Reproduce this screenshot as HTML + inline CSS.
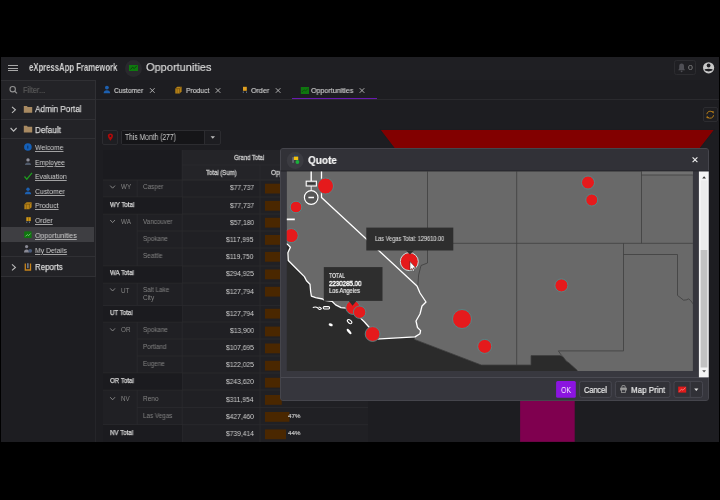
<!DOCTYPE html>
<html><head><meta charset="utf-8">
<style>
html,body{margin:0;padding:0;background:#000;width:720px;height:500px;overflow:hidden;font-family:"Liberation Sans",sans-serif;}
.b{position:absolute;box-sizing:border-box;}
.t{position:absolute;white-space:nowrap;transform-origin:0 50%;z-index:5;will-change:transform;}
svg{position:absolute;left:0;top:0;}
</style></head><body>
<div class="b" style="left:1px;top:57px;width:718px;height:385px;background:#1d1d21;"></div>
<!-- header -->
<div class="b" style="left:1px;top:57px;width:718px;height:23px;background:#1f1f23;"></div>
<div class="b" style="left:8px;top:64.7px;width:9.5px;height:1.2px;background:#a8a8a8;"></div>
<div class="b" style="left:8px;top:67.6px;width:9.5px;height:1.2px;background:#a8a8a8;"></div>
<div class="b" style="left:8px;top:70.3px;width:9.5px;height:1.2px;background:#a8a8a8;"></div>
<div class="b" style="left:124.8px;top:59.8px;width:17px;height:17px;border-radius:50%;background:#29292d;"></div>
<div class="b" style="left:129.2px;top:64.5px;width:8.8px;height:6.8px;background:#0f7a0f;"></div>
<svg width="720" height="500" style="z-index:2"><polyline points="130.5,69.5 132.5,67.2 134.3,68.5 136.8,65.8" fill="none" stroke="#0a3d0a" stroke-width="0.9"/></svg>
<div class="b" style="left:674.3px;top:60.3px;width:21.5px;height:14.6px;border:1px solid #2c2c30;border-radius:2.5px;"></div>
<svg width="720" height="500" style="z-index:2">
 <path d="M678.2,70.3 L685,70.3 L684,68.6 L684,66.2 Q684,63.6 681.6,63.6 Q679.2,63.6 679.2,66.2 L679.2,68.6 Z" fill="#4f4f55"/>
 <circle cx="681.6" cy="71.3" r="0.9" fill="#4f4f55"/>
 <circle cx="708.6" cy="67.8" r="5.6" fill="#c9c9c9"/>
 <circle cx="708.6" cy="65.5" r="1.9" fill="#1f1f23"/>
 <path d="M704.6,69.2 Q708.6,68.2 712.6,69.2 L712.2,70.6 Q708.6,72.2 705,70.6 Z" fill="#1f1f23"/>
</svg>
<!-- sidebar -->
<div class="b" style="left:1px;top:80px;width:94.6px;height:197px;background:#232327;border-top:1px solid #303034;border-right:1px solid #303034;"></div>
<div class="b" style="left:94.6px;top:277px;width:1px;height:165px;background:#252529;"></div>
<div class="b" style="left:1px;top:98.6px;width:94px;height:1px;background:#303034;"></div>
<div class="b" style="left:1px;top:118.6px;width:94px;height:1px;background:#303034;"></div>
<div class="b" style="left:1px;top:138.2px;width:94px;height:1px;background:#303034;"></div>
<div class="b" style="left:1px;top:227px;width:93.4px;height:15px;background:#3e3e42;"></div>
<div class="b" style="left:1px;top:256px;width:94px;height:1px;background:#303034;"></div>
<div class="b" style="left:1px;top:276.2px;width:94px;height:1px;background:#303034;"></div>
<svg width="720" height="500" style="z-index:2">
 <!-- search -->
 <circle cx="12.7" cy="89.2" r="2.7" fill="none" stroke="#929292" stroke-width="1.1"/>
 <line x1="14.7" y1="91.2" x2="17" y2="93.4" stroke="#929292" stroke-width="1.2"/>
 <!-- chevrons -->
 <polyline points="12,106.8 15.4,109.8 12,112.8" fill="none" stroke="#bcbcbc" stroke-width="1.1"/>
 <polyline points="10.6,128 13.6,131.2 16.6,128" fill="none" stroke="#bcbcbc" stroke-width="1.1"/>
 <polyline points="12,264.4 15.4,267.4 12,270.4" fill="none" stroke="#bcbcbc" stroke-width="1.1"/>
 <!-- folders -->
 <path d="M23.8,106 h3 l1,1 h4.4 v5.8 h-8.4 z" fill="#a88a62"/>
 <path d="M23.8,125.7 h3 l1,1 h4.4 v5.8 h-8.4 z" fill="#a88a62"/>
 <!-- welcome -->
 <circle cx="27.9" cy="147" r="3.8" fill="#1560b8"/>
 <rect x="27.3" y="145.6" width="1" height="3" fill="#0b2f5c"/>
 <!-- employee -->
 <circle cx="28" cy="159.9" r="1.7" fill="#8f8f9a"/>
 <path d="M25,165 Q25,162.4 28,162.4 Q31,162.4 31,165 Z" fill="#505a6a"/>
 <!-- evaluation check -->
 <polyline points="24.5,176.5 26.8,179.2 32,172.8" fill="none" stroke="#1f9e1f" stroke-width="1.2"/>
 <!-- customer -->
 <circle cx="28" cy="189.3" r="1.7" fill="#1d60b0"/>
 <path d="M24.8,194.3 Q25,191.6 28,191.6 Q31,191.6 31.2,194.3 Z" fill="#1d60b0"/>
 <!-- product -->
 <path d="M24.4,204.2 L26.6,202.3 L31.6,202.3 L31.6,207.2 L29.4,209.2 L24.4,209.2 Z" fill="#b88418"/>
 <path d="M24.4,204.2 L29.4,204.2 L31.6,202.3 M29.4,204.2 L29.4,209.2" fill="none" stroke="#5a3c08" stroke-width="0.5"/>
 <line x1="26.4" y1="204.4" x2="26.4" y2="209" stroke="#7a5410" stroke-width="0.6"/>
 <!-- order -->
 <rect x="26.3" y="217.2" width="4.5" height="3.9" fill="#d09818"/>
 <line x1="28.55" y1="217.4" x2="28.55" y2="221" stroke="#6a4a08" stroke-width="0.5"/>
 <rect x="26.2" y="221.6" width="1" height="1.4" fill="#5a6a80"/>
 <rect x="29" y="221.6" width="1" height="1.4" fill="#5a6a80"/>
 <!-- opportunities -->
 <rect x="24.2" y="231.4" width="7.4" height="6.6" fill="#0f760f"/>
 <polyline points="25.5,236.4 27.3,234.6 28.6,235.6 30.5,233.6" fill="none" stroke="#9ad89a" stroke-width="0.7"/>
 <!-- my details -->
 <circle cx="26.6" cy="246.6" r="1.6" fill="#8a8a95"/>
 <path d="M24,252.4 Q24,249.4 26.6,249.4 Q29.2,249.4 29.2,252.4 Z" fill="#8a8a95"/>
 <circle cx="30.2" cy="250.8" r="1.9" fill="#4a5a78"/>
 <!-- reports -->
 <path d="M25.3,263.6 V270 H30.5 V263.6" fill="none" stroke="#c8841a" stroke-width="1.3"/>
 <rect x="27.4" y="263.2" width="1" height="5" fill="#9fb0c8"/>
</svg>
<!-- tab bar -->
<div class="b" style="left:96px;top:98.6px;width:623px;height:1.1px;background:#2a2a2e;"></div>
<div class="b" style="left:292.3px;top:97.6px;width:84.4px;height:1.6px;background:#6a1ab0;z-index:3"></div>
<svg width="720" height="500" style="z-index:2">
 <!-- customer icon -->
 <circle cx="106.9" cy="87.6" r="1.9" fill="#1d60b0"/>
 <path d="M103.6,93.3 Q103.8,90.2 106.9,90.2 Q110,90.2 110.2,93.3 Z" fill="#1d60b0"/>
 <!-- product icon -->
 <path d="M175.3,88.6 L177.3,86.8 L181.6,86.8 L181.6,91.6 L179.6,93.4 L175.3,93.4 Z" fill="#b88418"/>
 <path d="M175.3,88.6 L179.6,88.6 L181.6,86.8 M179.6,88.6 L179.6,93.4" fill="none" stroke="#5a3c08" stroke-width="0.5"/>
 <line x1="177.2" y1="88.8" x2="177.2" y2="93.2" stroke="#7a5410" stroke-width="0.6"/>
 <!-- order icon -->
 <rect x="243" y="86.8" width="3.8" height="4" fill="#e0a020"/>
 <rect x="242.8" y="91.4" width="1" height="1.6" fill="#5a6a80"/>
 <rect x="246" y="91.4" width="1" height="1.6" fill="#5a6a80"/>
 <!-- opp icon -->
 <rect x="300.8" y="87" width="8.2" height="7" fill="#0f760f"/>
 <polyline points="302,92 304,89.8 305.6,91 307.8,88.6" fill="none" stroke="#0b4a0b" stroke-width="0.8"/>
 <!-- close x -->
 <g stroke="#bdbdbd" stroke-width="0.9">
  <path d="M150,88.2 l4.6,4.6 M154.6,88.2 l-4.6,4.6"/>
  <path d="M215.7,88.2 l4.6,4.6 M220.3,88.2 l-4.6,4.6"/>
  <path d="M275.8,88.2 l4.6,4.6 M280.4,88.2 l-4.6,4.6"/>
  <path d="M359.7,88.2 l4.6,4.6 M364.3,88.2 l-4.6,4.6"/>
 </g>
</svg>
<!-- toolbar -->
<div class="b" style="left:102.4px;top:129.6px;width:15.2px;height:15px;border:1px solid #2c2c30;border-radius:2px;background:#1e1e22;"></div>
<div class="b" style="left:121.2px;top:129.9px;width:99.6px;height:14.8px;border:1px solid #2c2c30;border-radius:2px;background:#1d1d21;"></div>
<div class="b" style="left:122.2px;top:130.9px;width:83.2px;height:12.8px;background:#151518;border-right:1px solid #2c2c30;"></div>
<div class="b" style="left:702.6px;top:107.2px;width:15px;height:15px;border:1px solid #2c2c30;border-radius:2px;background:#1e1e22;"></div>
<svg width="720" height="500" style="z-index:2">
 <path d="M110.4,140.8 Q107.8,137.6 107.8,136 A2.6,2.6 0 1 1 113,136 Q113,137.6 110.4,140.8 Z" fill="#b00a0a"/>
 <circle cx="110.4" cy="136" r="0.9" fill="#1e1e22"/>
 <path d="M210.6,136.3 h4.4 l-2.2,2.4 z" fill="#bdbdbd"/>
 <!-- refresh -->
 <path d="M706.8,114.2 A3.4,3.4 0 0 1 712.6,112.2" fill="none" stroke="#b27a18" stroke-width="1"/>
 <path d="M713.6,115.2 A3.4,3.4 0 0 1 707.8,117.2" fill="none" stroke="#b27a18" stroke-width="1"/>
 <path d="M711.4,111 l2.6,0.4 l-0.6,2.4 z" fill="#b27a18"/>
 <path d="M709,118.4 l-2.6,-0.4 l0.6,-2.4 z" fill="#b27a18"/>
</svg>
<!-- funnel chart -->
<svg width="720" height="500" style="z-index:1">
 <polygon points="380,129.5 714.6,129.5 680,174 414,174" fill="#820000" stroke="#0f2024" stroke-width="0.8"/>
 <rect x="520.1" y="395" width="54.6" height="46.8" fill="#7f004f"/>
</svg>
<!-- pivot grid -->
<div class="b" style="left:103px;top:150px;width:265px;height:292px;background:#202024;"></div>
<div class="b" style="left:103px;top:150px;width:79px;height:30px;background:#1b1b1f;"></div>
<div class="b" style="left:182px;top:150px;width:186px;height:30px;background:#242428;"></div>
<svg width="720" height="500" style="z-index:2" id="pv">
 <g stroke="#2b2b2f" stroke-width="0.8" fill="none">
  <line x1="182" y1="165" x2="368" y2="165"/>
  <line x1="182" y1="180" x2="368" y2="180"/>
  <line x1="182.2" y1="150" x2="182.2" y2="442"/>
  <line x1="260" y1="165" x2="260" y2="442"/>
  <line x1="137.2" y1="180" x2="137.2" y2="197"/>
  <line x1="137.2" y1="214" x2="137.2" y2="266"/>
  <line x1="137.2" y1="283" x2="137.2" y2="305.6"/>
  <line x1="137.2" y1="322" x2="137.2" y2="373"/>
  <line x1="137.2" y1="390" x2="137.2" y2="424.7"/>
 </g>
 <g stroke="#2b2b2f" stroke-width="0.8">
  <line x1="103" y1="180" x2="368" y2="180"/>
  <line x1="103" y1="197" x2="368" y2="197"/>
  <line x1="103" y1="214" x2="368" y2="214"/>
  <line x1="137" y1="231" x2="368" y2="231"/>
  <line x1="137" y1="248" x2="368" y2="248"/>
  <line x1="103" y1="266" x2="368" y2="266"/>
  <line x1="103" y1="283" x2="368" y2="283"/>
  <line x1="103" y1="305.6" x2="368" y2="305.6"/>
  <line x1="103" y1="322" x2="368" y2="322"/>
  <line x1="137" y1="339" x2="368" y2="339"/>
  <line x1="137" y1="356" x2="368" y2="356"/>
  <line x1="103" y1="373" x2="368" y2="373"/>
  <line x1="103" y1="390" x2="368" y2="390"/>
  <line x1="137" y1="407.5" x2="368" y2="407.5"/>
  <line x1="103" y1="424.7" x2="368" y2="424.7"/>
 </g>
 <g fill="#1b1b1f">
  <rect x="103" y="197.4" width="79" height="16.2"/>
  <rect x="103" y="266.4" width="79" height="16.2"/>
  <rect x="103" y="306" width="79" height="15.6"/>
  <rect x="103" y="373.4" width="79" height="16.2"/>
  <rect x="103" y="425.1" width="79" height="16.9"/>
 </g>
 <g fill="none" stroke="#8e8e8e" stroke-width="0.9">
  <polyline points="110.2,185.6 112.6,188.2 115,185.6"/>
  <polyline points="110.2,220 112.6,222.6 115,220"/>
  <polyline points="110.2,288.4 112.6,291 115,288.4"/>
  <polyline points="110.2,328.4 112.6,331 115,328.4"/>
  <polyline points="110.2,397.2 112.6,399.8 115,397.2"/>
 </g>
 <g fill="#4a2700">
  <rect x="265" y="183.7" width="30" height="9.8"/>
  <rect x="265" y="200.9" width="30" height="9.8"/>
  <rect x="265" y="217.8" width="25" height="9.8"/>
  <rect x="265" y="235" width="28" height="9.8"/>
  <rect x="265" y="251.9" width="28" height="9.8"/>
  <rect x="265" y="269.5" width="30" height="9.8"/>
  <rect x="265" y="286.8" width="30" height="9.8"/>
  <rect x="265" y="308.8" width="30" height="9.8"/>
  <rect x="265" y="326.6" width="22" height="9.8"/>
  <rect x="265" y="343.5" width="28" height="9.8"/>
  <rect x="265" y="360.8" width="28" height="9.8"/>
  <rect x="265" y="377.8" width="30" height="9.8"/>
  <rect x="265" y="395" width="16.8" height="9.8"/>
  <rect x="265" y="412" width="24.4" height="9.8"/>
  <rect x="265" y="429.4" width="21" height="9.8"/>
 </g>
</svg>
<!-- dialog -->
<div class="b" style="left:280px;top:148px;width:429px;height:253.3px;background:#38383f;border:1px solid #45454c;border-radius:3px;z-index:10;overflow:hidden;">
  <div class="b" style="left:0;top:0;width:100%;height:22.5px;background:#313137;"></div>
  <div class="b" style="left:0;top:228.3px;width:100%;height:1px;background:#4a4a52;"></div>
  <div class="b" style="left:0;top:229.3px;width:100%;height:24px;background:#36363d;"></div>
</div>
<svg width="720" height="500" style="z-index:11">
 <circle cx="295.2" cy="160.6" r="8.5" fill="#3b3b41"/>
 <rect x="292.3" y="157.2" width="1.5" height="5.6" fill="#70707c"/>
 <rect x="294" y="155" width="4.2" height="1.4" fill="#24406a"/>
 <rect x="293.9" y="156.6" width="4.3" height="3.4" fill="#f0c010"/>
 <circle cx="297.4" cy="162" r="1.9" fill="#1ab03a"/>
 <path d="M692.6,157.4 l4.8,4.8 M697.4,157.4 l-4.8,4.8" stroke="#f0f0f0" stroke-width="1.1"/>
 <!-- scrollbar -->
 <rect x="692.9" y="171.3" width="6" height="199.8" fill="#36363d"/>
 <rect x="698.9" y="171.3" width="9.8" height="206" fill="#f4f4f4"/>
 <rect x="701" y="180.4" width="6.3" height="69.6" fill="#ececec"/>
 <rect x="700.6" y="250" width="6.8" height="117.5" fill="#c2c2c2"/>
 <path d="M702.2,178.4 h3.8 l-1.9,-2.2 z" fill="#333"/>
 <path d="M702.2,370.2 h3.8 l-1.9,2.2 z" fill="#555"/>
 <!-- buttons -->
 <rect x="556.1" y="381" width="19.7" height="16.7" rx="1.5" fill="#8b14e0"/>
 <rect x="579.6" y="381.4" width="31.7" height="16" rx="2" fill="#313137" stroke="#4a4a52" stroke-width="0.9"/>
 <rect x="615.4" y="381.4" width="54.6" height="16" rx="2" fill="#313137" stroke="#4a4a52" stroke-width="0.9"/>
 <rect x="674" y="381.4" width="28.5" height="16" rx="2" fill="#313137" stroke="#4a4a52" stroke-width="0.9"/>
 <line x1="690.2" y1="381.6" x2="690.2" y2="397.2" stroke="#4a4a52" stroke-width="0.9"/>
 <rect x="678.2" y="386.6" width="8" height="6" fill="#e01a1a"/>
 <polyline points="679.2,391.6 681.4,389.2 683,390.2 685.4,387.6" fill="none" stroke="#f4b0b0" stroke-width="0.6"/>
 <path d="M694.2,388.6 h4.2 l-2.1,2.4 z" fill="#e0e0e0"/>
 <!-- printer -->
 <path d="M621.6,387.6 L622.2,385.6 L624.8,385.6 L625.4,387.6" fill="none" stroke="#9a9a9a" stroke-width="0.9"/>
 <rect x="620.2" y="387.4" width="6.6" height="3.4" rx="0.8" fill="#9a9a9a"/>
 <rect x="621.6" y="389.8" width="3.8" height="2.8" fill="#36363d" stroke="#9a9a9a" stroke-width="0.8"/>
</svg>
<!-- map -->
<svg width="720" height="500" style="z-index:12">
 <defs><clipPath id="mc"><rect x="286.8" y="171.3" width="406.1" height="199.8"/></clipPath></defs>
 <g clip-path="url(#mc)">
  <rect x="280" y="165" width="420" height="210" fill="#2b2b2b"/>
  <path d="M280,165 L700,165 L700,375 L577.4,375 L577.4,370.5 L572.4,366 L569,362.9 L566.2,361 L563.4,357.3 L560.4,355.6 L531,355.6 L531,365 L481.25,365 L414.4,339.4 L415,336.9 L376,339.1 L373.5,335.5 L370,328.3 L364.5,322 L359,316.6 L353,311 L346.4,308.1 L341,307.6 L335.6,304.9 L332,301.3 L324.8,300.4 L322.6,299 L315.6,297.6 L311.4,296.2 L310.7,292 L310,284.3 L306.5,280.8 L304.4,276.6 L296,268.2 L288.3,260.5 L287.9,252.8 L290.4,247.2 L287.6,244.4 L284,243 L280,243 Z" fill="#696969"/>
  <rect x="641.5" y="165" width="60" height="10" fill="#717171"/>
  <g stroke="#3f3f3f" stroke-width="0.8" fill="none">
   <polyline points="427.5,165 427.5,263 421,265.5 418.6,275 417.8,286.5"/>
   <line x1="427.5" y1="243.3" x2="700" y2="243.3"/>
   <line x1="516.7" y1="165" x2="516.7" y2="365"/>
   <line x1="641.5" y1="165" x2="641.5" y2="243.3"/>
   <line x1="641.5" y1="175" x2="700" y2="175"/>
   <polyline points="623.5,243.3 623.5,350.9 558.4,350.9 560.6,354.2 563.4,357.3 566.2,361 569,362.9 572.4,366 577.4,370.5"/>
   <polyline points="623.5,254.5 677.5,254.5 677.5,295.4 683.6,300.2 686.2,299.9 688.7,298.9 690.6,300.5 693.2,304"/>
   <polyline points="414.4,339.4 481.25,365 531,365 531,355.6 560.4,355.6"/>
  </g>
  <g stroke="#ffffff" stroke-width="1.3" fill="none" stroke-linejoin="round">
   <polyline points="321.5,165 321.5,197.5 417,286 420,293 426,302 422,306 420,314 416,321 417.5,327.5 420.6,330.6 420,333.7 415,336.9 376,339.1 373.5,335.5 370,328.3 364.5,322 359,316.6 353,311 346.4,308.1 341,307.6 335.6,304.9 332,301.3 324.8,300.4 322.6,299 315.6,297.6 311.4,296.2 310.7,292 310,284.3 306.5,280.8 304.4,276.6 296,268.2 288.3,260.5 287.9,252.8 290.4,247.2 287.6,244.4 284,243"/>
   <line x1="284" y1="219.4" x2="294.8" y2="219.4" stroke-width="1.6"/>
  </g>
  <g fill="none" stroke="#ffffff" stroke-width="1.1">
   <path d="M312.8,307.6 Q315.5,306.2 317.6,307.8 Q319.4,310.8 321.4,308.6 Q320.6,306.8 318.6,307.4"/>
   <rect x="323.2" y="306.6" width="6.4" height="2.4" rx="1.2"/>
   <ellipse cx="349.6" cy="321.6" rx="2.6" ry="1.5" transform="rotate(40 349.6 321.6)"/>
  </g>
  <g fill="#ffffff">
   <ellipse cx="330.7" cy="324.7" rx="2.1" ry="1.4" transform="rotate(20 330.7 324.7)"/>
   <ellipse cx="349.1" cy="331.5" rx="3.3" ry="1.3" transform="rotate(50 349.1 331.5)"/>
  </g>
  <!-- zoom control -->
  <g stroke="#ffffff" fill="none">
   <line x1="311.2" y1="165" x2="311.2" y2="181" stroke-width="1.4"/>
   <rect x="306.2" y="181.2" width="10.2" height="4.8" fill="#555" stroke-width="1.1"/>
   <line x1="307.8" y1="183.6" x2="314.8" y2="183.6" stroke="#333" stroke-width="1"/>
   <line x1="311.2" y1="186" x2="311.2" y2="190.3" stroke-width="0.9"/>
   <circle cx="311.2" cy="197.5" r="6.8" fill="#555" stroke-width="1.2"/>
   <line x1="308.4" y1="197.5" x2="314" y2="197.5" stroke-width="1.5"/>
  </g>
  <!-- bubbles -->
  <g fill="#e51a1c" stroke="#4f8a8a" stroke-width="0.9">
   <circle cx="325.5" cy="186" r="8"/>
   <circle cx="296" cy="207" r="5.8"/>
   <circle cx="291.2" cy="235.6" r="7"/>
   <circle cx="352.8" cy="307.4" r="7"/>
   <circle cx="359.6" cy="312.2" r="6.2"/>
   <circle cx="372.6" cy="334" r="7.4"/>
   <circle cx="462" cy="319" r="9.5"/>
   <circle cx="484.7" cy="346.4" r="7"/>
   <circle cx="561.4" cy="285.4" r="6.5"/>
   <circle cx="588" cy="182.5" r="6.5"/>
   <circle cx="591.75" cy="200" r="6"/>
   <circle cx="409.3" cy="261.6" r="9" stroke="#c8e0e0" stroke-width="1"/>
  </g>
  <!-- tooltips -->
  <rect x="366.3" y="227.6" width="87" height="22.9" fill="#2e2e2e"/>
  <path d="M406,250.4 h8 l-4,4 z" fill="#2e2e2e"/>
  <rect x="323.8" y="267.1" width="58.7" height="33.8" fill="#2e2e2e"/>
  <path d="M348.6,300.8 h8 l-4,5 z" fill="#2e2e2e"/>
  <!-- cursor -->
  <path d="M410,261.6 L410,270.2 L412,268.4 L413.4,271.4 L414.6,270.8 L413.2,267.9 L415.8,267.8 Z" fill="#ffffff" stroke="#222" stroke-width="0.5"/>
 </g>
 <line x1="280.5" y1="170.8" x2="709" y2="170.8" stroke="#26262b" stroke-width="0.9"/>
</svg>

<div class="t" style="left:29.30px;top:62.81px;font-size:10.15px;line-height:10.15px;color:#d0d0d0;font-weight:bold;transform:scaleX(0.762);">eXpressApp Framework</div>
<div class="t" style="left:146.20px;top:62.15px;font-size:11.52px;line-height:11.52px;color:#dadada;font-weight:normal;-webkit-text-stroke:0.2px #dadada;transform:scaleX(0.956);">Opportunities</div>
<div class="t" style="left:688.00px;top:64.10px;font-size:7.56px;line-height:7.56px;color:#8a8a8a;font-weight:normal;transform:scaleX(1.166);">0</div>
<div class="t" style="left:22.90px;top:85.74px;font-size:8.81px;line-height:8.81px;color:#5a5a5a;font-weight:normal;-webkit-text-stroke:0.2px #5a5a5a;transform:scaleX(0.841);">Filter...</div>
<div class="t" style="left:35.20px;top:105.20px;font-size:9.33px;line-height:9.33px;color:#d8d8d8;font-weight:normal;-webkit-text-stroke:0.25px #d8d8d8;transform:scaleX(0.873);">Admin Portal</div>
<div class="t" style="left:35.30px;top:125.50px;font-size:9.33px;line-height:9.33px;color:#d8d8d8;font-weight:normal;-webkit-text-stroke:0.25px #d8d8d8;transform:scaleX(0.876);">Default</div>
<div class="t" style="left:34.70px;top:143.85px;font-size:7.74px;line-height:7.74px;color:#cdcdcd;font-weight:normal;text-decoration:underline;text-decoration-thickness:0.6px;text-underline-offset:0.7px;text-decoration-color:rgba(205,205,205,0.75);transform:scaleX(0.888);">Welcome</div>
<div class="t" style="left:34.70px;top:158.75px;font-size:7.74px;line-height:7.74px;color:#cdcdcd;font-weight:normal;text-decoration:underline;text-decoration-thickness:0.6px;text-underline-offset:0.7px;text-decoration-color:rgba(205,205,205,0.75);transform:scaleX(0.869);">Employee</div>
<div class="t" style="left:34.70px;top:173.35px;font-size:7.74px;line-height:7.74px;color:#cdcdcd;font-weight:normal;text-decoration:underline;text-decoration-thickness:0.6px;text-underline-offset:0.7px;text-decoration-color:rgba(205,205,205,0.75);transform:scaleX(0.878);">Evaluation</div>
<div class="t" style="left:34.70px;top:188.05px;font-size:7.74px;line-height:7.74px;color:#cdcdcd;font-weight:normal;text-decoration:underline;text-decoration-thickness:0.6px;text-underline-offset:0.7px;text-decoration-color:rgba(205,205,205,0.75);transform:scaleX(0.892);">Customer</div>
<div class="t" style="left:34.70px;top:202.45px;font-size:7.74px;line-height:7.74px;color:#cdcdcd;font-weight:normal;text-decoration:underline;text-decoration-thickness:0.6px;text-underline-offset:0.7px;text-decoration-color:rgba(205,205,205,0.75);transform:scaleX(0.882);">Product</div>
<div class="t" style="left:34.70px;top:217.15px;font-size:7.74px;line-height:7.74px;color:#cdcdcd;font-weight:normal;text-decoration:underline;text-decoration-thickness:0.6px;text-underline-offset:0.7px;text-decoration-color:rgba(205,205,205,0.75);transform:scaleX(0.890);">Order</div>
<div class="t" style="left:34.70px;top:231.65px;font-size:7.74px;line-height:7.74px;color:#cdcdcd;font-weight:normal;text-decoration:underline;text-decoration-thickness:0.6px;text-underline-offset:0.7px;text-decoration-color:rgba(205,205,205,0.75);transform:scaleX(0.906);">Opportunities</div>
<div class="t" style="left:34.70px;top:246.55px;font-size:7.74px;line-height:7.74px;color:#cdcdcd;font-weight:normal;text-decoration:underline;text-decoration-thickness:0.6px;text-underline-offset:0.7px;text-decoration-color:rgba(205,205,205,0.75);transform:scaleX(0.883);">My Details</div>
<div class="t" style="left:35.30px;top:263.20px;font-size:9.33px;line-height:9.33px;color:#d8d8d8;font-weight:normal;-webkit-text-stroke:0.25px #d8d8d8;transform:scaleX(0.848);">Reports</div>
<div class="t" style="left:113.90px;top:86.65px;font-size:7.74px;line-height:7.74px;color:#cccccc;font-weight:normal;-webkit-text-stroke:0.15px #cccccc;transform:scaleX(0.868);">Customer</div>
<div class="t" style="left:185.60px;top:86.65px;font-size:7.74px;line-height:7.74px;color:#cccccc;font-weight:normal;-webkit-text-stroke:0.15px #cccccc;transform:scaleX(0.878);">Product</div>
<div class="t" style="left:251.25px;top:86.65px;font-size:7.74px;line-height:7.74px;color:#cccccc;font-weight:normal;-webkit-text-stroke:0.15px #cccccc;transform:scaleX(0.920);">Order</div>
<div class="t" style="left:311.00px;top:86.65px;font-size:7.74px;line-height:7.74px;color:#cccccc;font-weight:normal;-webkit-text-stroke:0.15px #cccccc;transform:scaleX(0.919);">Opportunities</div>
<div class="t" style="left:125.00px;top:133.80px;font-size:8.27px;line-height:8.27px;color:#cccccc;font-weight:normal;transform:scaleX(0.813);">This Month (277)</div>
<div class="t" style="left:233.90px;top:154.71px;font-size:6.84px;line-height:6.84px;color:#c8c8c8;font-weight:normal;-webkit-text-stroke:0.3px #c8c8c8;transform:scaleX(0.861);">Grand Total</div>
<div class="t" style="left:206.10px;top:169.55px;font-size:6.67px;line-height:6.67px;color:#c8c8c8;font-weight:normal;-webkit-text-stroke:0.3px #c8c8c8;transform:scaleX(0.899);">Total (Sum)</div>
<div class="t" style="left:270.60px;top:169.55px;font-size:6.67px;line-height:6.67px;color:#c8c8c8;font-weight:normal;-webkit-text-stroke:0.3px #c8c8c8;transform:scaleX(0.950);">Opportunities</div>
<div class="t" style="left:120.90px;top:184.46px;font-size:6.31px;line-height:6.31px;color:#838383;font-weight:normal;">WY</div>
<div class="t" style="left:143.30px;top:184.31px;font-size:6.49px;line-height:6.49px;color:#838383;font-weight:normal;transform:scaleX(0.970);">Casper</div>
<div class="t" style="left:229.63px;top:184.41px;font-size:7.2px;line-height:7.2px;color:#d0d0d0;font-weight:normal;transform:scaleX(0.930);">$77,737</div>
<div class="t" style="left:110.20px;top:201.61px;font-size:6.84px;line-height:6.84px;color:#d8d8d8;font-weight:normal;-webkit-text-stroke:0.25px #d8d8d8;transform:scaleX(0.900);">WY Total</div>
<div class="t" style="left:229.63px;top:201.71px;font-size:7.2px;line-height:7.2px;color:#d0d0d0;font-weight:normal;transform:scaleX(0.930);">$77,737</div>
<div class="t" style="left:120.90px;top:218.86px;font-size:6.31px;line-height:6.31px;color:#838383;font-weight:normal;">WA</div>
<div class="t" style="left:143.30px;top:218.71px;font-size:6.49px;line-height:6.49px;color:#838383;font-weight:normal;transform:scaleX(0.970);">Vancouver</div>
<div class="t" style="left:229.63px;top:218.81px;font-size:7.2px;line-height:7.2px;color:#d0d0d0;font-weight:normal;transform:scaleX(0.930);">$57,180</div>
<div class="t" style="left:143.30px;top:235.91px;font-size:6.49px;line-height:6.49px;color:#838383;font-weight:normal;transform:scaleX(0.970);">Spokane</div>
<div class="t" style="left:226.41px;top:236.01px;font-size:7.2px;line-height:7.2px;color:#d0d0d0;font-weight:normal;transform:scaleX(0.930);">$117,995</div>
<div class="t" style="left:143.30px;top:253.11px;font-size:6.49px;line-height:6.49px;color:#838383;font-weight:normal;transform:scaleX(0.970);">Seattle</div>
<div class="t" style="left:226.41px;top:253.21px;font-size:7.2px;line-height:7.2px;color:#d0d0d0;font-weight:normal;transform:scaleX(0.930);">$119,750</div>
<div class="t" style="left:110.20px;top:270.31px;font-size:6.84px;line-height:6.84px;color:#d8d8d8;font-weight:normal;-webkit-text-stroke:0.25px #d8d8d8;transform:scaleX(0.900);">WA Total</div>
<div class="t" style="left:225.91px;top:270.41px;font-size:7.2px;line-height:7.2px;color:#d0d0d0;font-weight:normal;transform:scaleX(0.930);">$294,925</div>
<div class="t" style="left:120.90px;top:287.56px;font-size:6.31px;line-height:6.31px;color:#838383;font-weight:normal;">UT</div>
<div class="t" style="left:143.30px;top:287.41px;font-size:6.49px;line-height:6.49px;color:#838383;font-weight:normal;transform:scaleX(0.970);">Salt Lake</div>
<div class="t" style="left:143.30px;top:294.61px;font-size:6.49px;line-height:6.49px;color:#838383;font-weight:normal;transform:scaleX(0.970);">City</div>
<div class="t" style="left:225.91px;top:287.51px;font-size:7.2px;line-height:7.2px;color:#d0d0d0;font-weight:normal;transform:scaleX(0.930);">$127,794</div>
<div class="t" style="left:110.20px;top:309.61px;font-size:6.84px;line-height:6.84px;color:#d8d8d8;font-weight:normal;-webkit-text-stroke:0.25px #d8d8d8;transform:scaleX(0.900);">UT Total</div>
<div class="t" style="left:225.91px;top:309.71px;font-size:7.2px;line-height:7.2px;color:#d0d0d0;font-weight:normal;transform:scaleX(0.930);">$127,794</div>
<div class="t" style="left:120.90px;top:326.86px;font-size:6.31px;line-height:6.31px;color:#838383;font-weight:normal;">OR</div>
<div class="t" style="left:143.30px;top:326.71px;font-size:6.49px;line-height:6.49px;color:#838383;font-weight:normal;transform:scaleX(0.970);">Spokane</div>
<div class="t" style="left:229.63px;top:326.81px;font-size:7.2px;line-height:7.2px;color:#d0d0d0;font-weight:normal;transform:scaleX(0.930);">$13,900</div>
<div class="t" style="left:143.30px;top:343.91px;font-size:6.49px;line-height:6.49px;color:#838383;font-weight:normal;transform:scaleX(0.970);">Portland</div>
<div class="t" style="left:225.91px;top:344.01px;font-size:7.2px;line-height:7.2px;color:#d0d0d0;font-weight:normal;transform:scaleX(0.930);">$107,695</div>
<div class="t" style="left:143.30px;top:361.11px;font-size:6.49px;line-height:6.49px;color:#838383;font-weight:normal;transform:scaleX(0.970);">Eugene</div>
<div class="t" style="left:225.91px;top:361.21px;font-size:7.2px;line-height:7.2px;color:#d0d0d0;font-weight:normal;transform:scaleX(0.930);">$122,025</div>
<div class="t" style="left:110.20px;top:378.31px;font-size:6.84px;line-height:6.84px;color:#d8d8d8;font-weight:normal;-webkit-text-stroke:0.25px #d8d8d8;transform:scaleX(0.900);">OR Total</div>
<div class="t" style="left:225.91px;top:378.41px;font-size:7.2px;line-height:7.2px;color:#d0d0d0;font-weight:normal;transform:scaleX(0.930);">$243,620</div>
<div class="t" style="left:120.90px;top:395.76px;font-size:6.31px;line-height:6.31px;color:#838383;font-weight:normal;">NV</div>
<div class="t" style="left:143.30px;top:395.61px;font-size:6.49px;line-height:6.49px;color:#838383;font-weight:normal;transform:scaleX(0.970);">Reno</div>
<div class="t" style="left:226.41px;top:395.71px;font-size:7.2px;line-height:7.2px;color:#d0d0d0;font-weight:normal;transform:scaleX(0.930);">$311,954</div>
<div class="t" style="left:143.30px;top:412.91px;font-size:6.49px;line-height:6.49px;color:#838383;font-weight:normal;transform:scaleX(0.970);">Las Vegas</div>
<div class="t" style="left:225.91px;top:413.01px;font-size:7.2px;line-height:7.2px;color:#d0d0d0;font-weight:normal;transform:scaleX(0.930);">$427,460</div>
<div class="t" style="left:110.20px;top:430.11px;font-size:6.84px;line-height:6.84px;color:#d8d8d8;font-weight:normal;-webkit-text-stroke:0.25px #d8d8d8;transform:scaleX(0.900);">NV Total</div>
<div class="t" style="left:225.91px;top:430.21px;font-size:7.2px;line-height:7.2px;color:#d0d0d0;font-weight:normal;transform:scaleX(0.930);">$739,414</div>
<div class="t" style="left:287.90px;top:397.26px;font-size:5.95px;line-height:5.95px;color:#c8c8c8;font-weight:normal;-webkit-text-stroke:0.15px #c8c8c8;transform:scaleX(1.043);">40%</div>
<div class="t" style="left:287.90px;top:414.26px;font-size:5.95px;line-height:5.95px;color:#c8c8c8;font-weight:normal;-webkit-text-stroke:0.15px #c8c8c8;transform:scaleX(1.043);">47%</div>
<div class="t" style="left:287.90px;top:431.26px;font-size:5.95px;line-height:5.95px;color:#c8c8c8;font-weight:normal;-webkit-text-stroke:0.15px #c8c8c8;transform:scaleX(1.043);">44%</div>
<div class="t" style="left:308.30px;top:154.81px;font-size:10.97px;line-height:10.97px;color:#f6f6f6;font-weight:bold;z-index:20;-webkit-text-stroke:0.2px #f6f6f6;transform:scaleX(0.912);">Quote</div>
<div class="t" style="left:374.70px;top:236.11px;font-size:6.84px;line-height:6.84px;color:#cfcfcf;font-weight:normal;z-index:30;-webkit-text-stroke:0.15px #cfcfcf;transform:scaleX(0.823);">Las Vegas Total: 129610.00</div>
<div class="t" style="left:328.60px;top:272.85px;font-size:6.67px;line-height:6.67px;color:#e8e8e8;font-weight:normal;z-index:30;-webkit-text-stroke:0.2px #e8e8e8;transform:scaleX(0.763);">TOTAL</div>
<div class="t" style="left:328.60px;top:280.21px;font-size:7.2px;line-height:7.2px;color:#f8f8f8;font-weight:normal;z-index:30;-webkit-text-stroke:0.45px #f8f8f8;transform:scaleX(0.853);">2230285.00</div>
<div class="t" style="left:328.60px;top:288.45px;font-size:6.67px;line-height:6.67px;color:#e8e8e8;font-weight:normal;z-index:30;-webkit-text-stroke:0.2px #e8e8e8;transform:scaleX(0.852);">Los Angeles</div>
<div class="t" style="left:561.00px;top:385.60px;font-size:9.33px;line-height:9.33px;color:#f4eefc;font-weight:normal;z-index:30;transform:scaleX(0.742);">OK</div>
<div class="t" style="left:583.90px;top:385.80px;font-size:9.33px;line-height:9.33px;color:#ececec;font-weight:normal;z-index:30;-webkit-text-stroke:0.2px #ececec;transform:scaleX(0.788);">Cancel</div>
<div class="t" style="left:631.40px;top:385.80px;font-size:9.33px;line-height:9.33px;color:#ececec;font-weight:normal;z-index:30;-webkit-text-stroke:0.2px #ececec;transform:scaleX(0.857);">Map Print</div>
</body></html>
